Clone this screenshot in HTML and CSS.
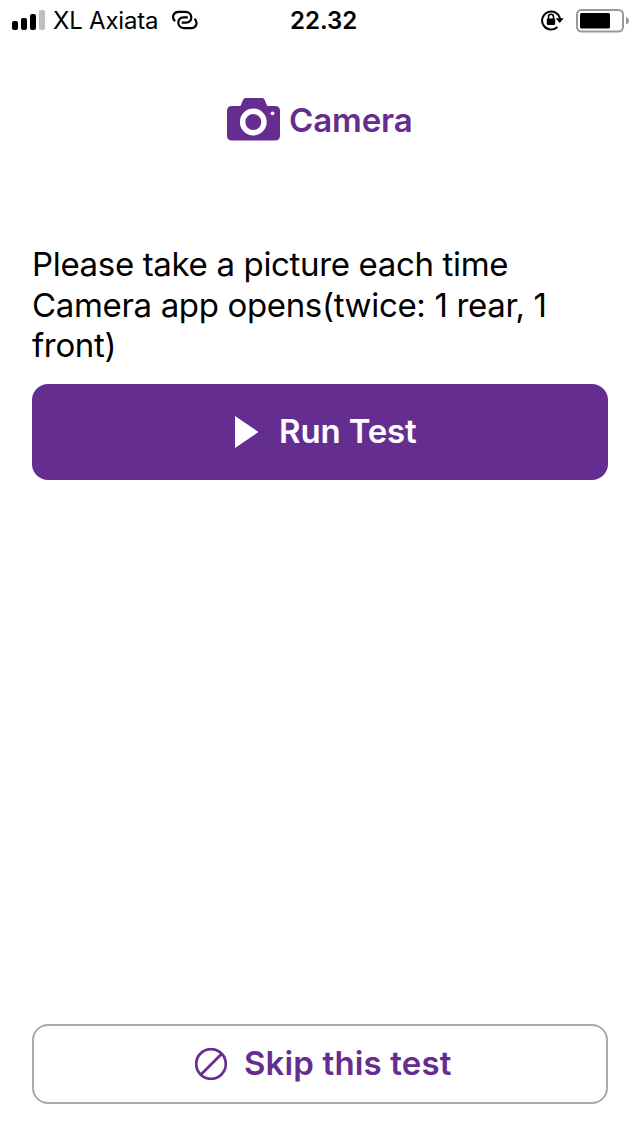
FILE: index.html
```html
<!DOCTYPE html>
<html lang="en">
<head>
<meta charset="utf-8">
<title>Camera test</title>
<link rel="stylesheet" href="styles.css">
</head>
<body>
<div class="screen">
  <header class="status">
    <div class="status-left">
      <svg class="signal" width="33" height="20" viewBox="0 0 33 20">
        <rect x="0" y="11" width="6" height="9" rx="2"/>
        <rect x="9" y="8" width="6" height="12" rx="2"/>
        <rect x="18" y="4" width="6" height="16" rx="2"/>
        <rect class="signal-off" x="27" y="0" width="6" height="20" rx="2"/>
      </svg>
      <span class="carrier">XL Axiata</span>
      <svg class="hotspot" width="26" height="20" viewBox="0 0 26 20">
        <path d="M3 11.300C-.6 7.500 1.200 1.900 6.500 1.900H13.200c8 0 8 10.800.8 10.800H9.800"/>
        <path d="M22.600 8.700c3.600 3.800 1.800 9.400-3.500 9.400H12.400c-8 0-8-10.800-.8-10.800h4.200"/>
      </svg>
    </div>
    <time class="clock">22.32</time>
    <div class="status-right">
      <svg class="lock" width="24" height="22" viewBox="0 0 24 22">
        <path class="ring" d="M17.400 18A9 9 0 1 1 20 10"/>
        <path d="M15.700 9.300h8L19.700 14z"/>
        <rect x="6.800" y="9.500" width="8.400" height="6.500" rx="1"/>
        <path class="shackle" d="M8.500 10V7.700a2.500 2.500 0 0 1 5 0V10"/>
      </svg>
      <svg class="battery" width="53" height="24" viewBox="0 0 53 24">
        <rect class="shell" x="1" y="1" width="46" height="21.500" rx="4.500"/>
        <rect x="4" y="4" width="30" height="15.500" rx="1.500"/>
        <path class="cap" d="M50 8c1.800.5 3 2 3 3.700s-1.200 3.300-3 3.800z"/>
      </svg>
    </div>
  </header>
  <main class="content">
    <h1 class="title">
      <svg width="53" height="43" viewBox="0 0 53 43">
        <path class="fill" d="M5 8h8.500l2.600-6.300Q16.800 0 18.500 0h16.700q1.700 0 2.400 1.700L40.200 8H48q5 0 5 5v24.500q0 5-5 5H5q-5 0-5-5V13q0-5 5-5z"/>
        <circle class="lens" cx="26.300" cy="24" r="10.700"/>
        <circle class="flash" cx="45.500" cy="15.300" r="1.900"/>
      </svg>
      <span class="title-text">Camera</span>
    </h1>
    <p class="message"><span class="line">Please take a picture each time</span> <span class="line">Camera app opens(twice: 1 rear, 1</span> <span class="line">front)</span></p>
    <button class="button run">
      <svg width="24" height="32" viewBox="0 0 24 32"><path d="M0 0l23.500 16L0 32z"/></svg>
      <span class="run-text">Run Test</span>
    </button>
    <button class="button skip">
      <svg width="32" height="32" viewBox="0 0 32 32"><circle cx="16" cy="16" r="14.800"/><path d="M6 26.500L26.500 6"/></svg>
      <span class="skip-text">Skip this test</span>
    </button>
  </main>
</div>
</body>
</html>
```
FILE: styles.css
```css
* { box-sizing: border-box; }
body { margin: 0; background: #fff; color: #000; font-family: Inter, sans-serif; }
svg { display: block; flex: none; }
.screen { width: 640px; height: 1136px; display: flex; flex-direction: column; overflow: hidden; }
.status { height: 40px; display: grid; grid-template-columns: 290px 1fr 100px; align-items: center; white-space: nowrap; }
.status-left { display: flex; align-items: center; padding-left: 12px; }
.carrier { width: 107px; margin: 1px 12px 0 8px; font-size: 24px; line-height: 30px; letter-spacing: -0.2px; }
.signal-off { fill: #bfbfbf; }
.hotspot { fill: none; stroke: #000; stroke-width: 2.200; }
.clock { padding-top: 2px; font-size: 24px; line-height: 30px; font-weight: 600; }
.status-right { display: flex; align-items: center; gap: 12px; }
.ring { fill: none; stroke: #000; stroke-width: 2; }
.shackle { fill: none; stroke: #000; stroke-width: 1.600; }
.battery { margin-top: 1px; }
.shell { fill: none; stroke: #999; stroke-width: 2; }
.cap { fill: #999; }
.content { flex: 1; display: flex; flex-direction: column; padding: 58px 32px 32px; }
.title { display: flex; align-items: center; gap: 9px; height: 43px; margin: 0 0 103px 195px; color: #662d91; font-size: 33px; line-height: 43px; font-weight: 600; letter-spacing: -0.1px; white-space: nowrap; }
.title-text { padding-top: 2px; }
.fill { fill: #662d91; }
.lens { fill: #662d91; stroke: #fff; stroke-width: 5.400; }
.flash { fill: #fff; }
.message { margin: 0 0 18px; font-size: 33px; line-height: 40px; letter-spacing: -0.340px; white-space: nowrap; }
.line { display: block; }
.line:first-child { padding-bottom: 1px; }
.line:last-child { padding-bottom: 1px; }
.button { display: flex; align-items: center; width: 576px; border-radius: 16px; padding: 0; font: 600 33px/40px Inter, sans-serif; white-space: nowrap; }
.button span { padding-bottom: 2px; }
.run { height: 96px; padding-left: 203px; gap: 20px; border: 0; background: #662d91; color: #fff; letter-spacing: -0.150px; }
.run svg { fill: #fff; }
.skip { height: 80px; margin-top: auto; padding-left: 161px; gap: 17px; border: 2px solid #aaa; background: #fff; color: #662d91; letter-spacing: 0.150px; }
.skip svg { fill: none; stroke: #662d91; stroke-width: 2.700; }
```
